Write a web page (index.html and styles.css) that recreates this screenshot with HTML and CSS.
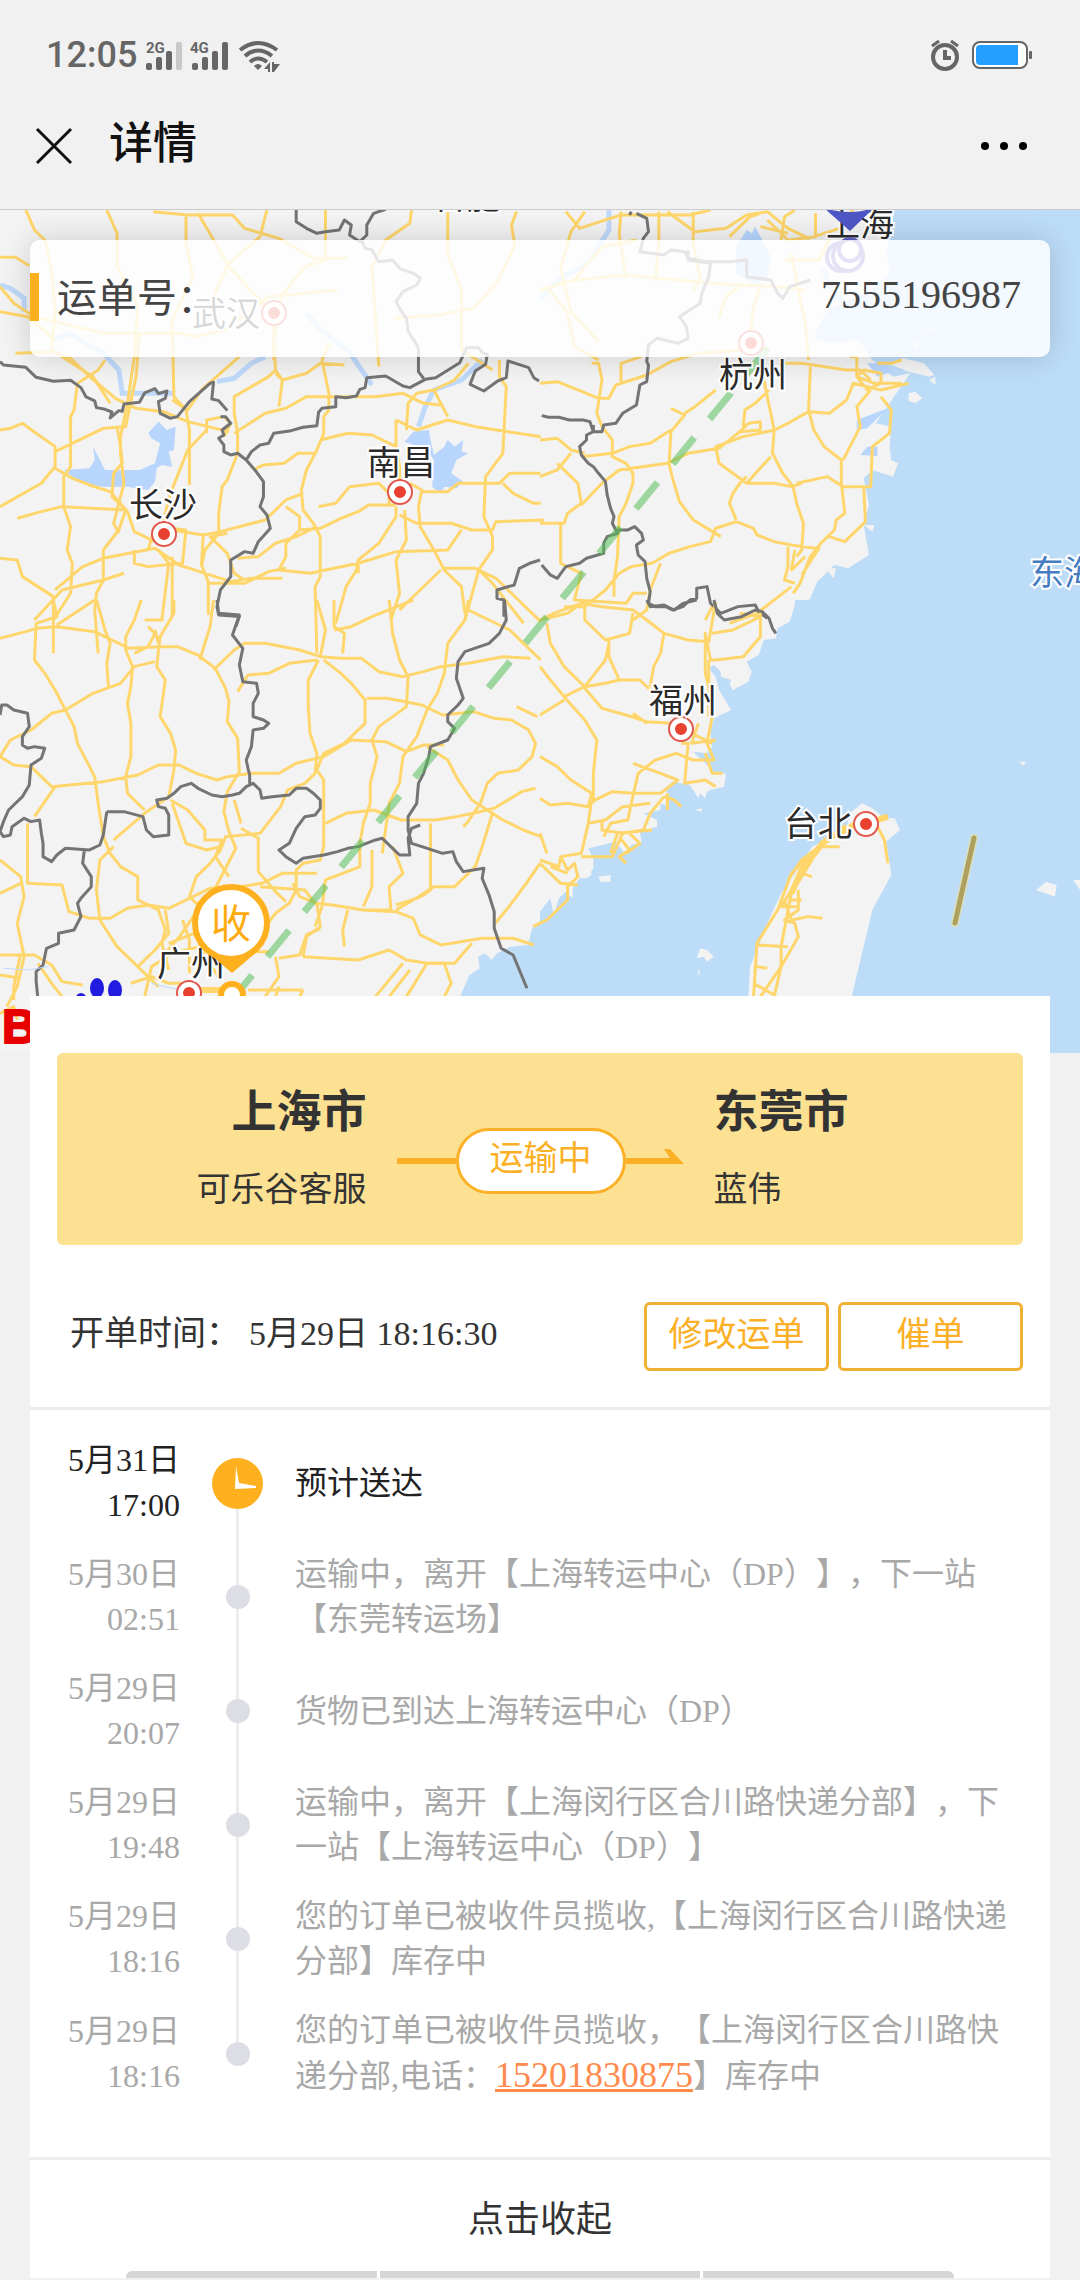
FILE: index.html
```html
<!DOCTYPE html>
<html lang="zh-CN">
<head>
    <meta charset="UTF-8">
    <meta name="viewport" content="width=device-width, initial-scale=1.0">
    <title>详情</title>
    <link rel="stylesheet" href="styles.css">
</head>
<body>
    <!-- Status bar -->
    <div class="status-bar">
        <span class="clock">12:05</span>
        <svg class="signals" width="134" height="34" viewBox="0 0 134 34">
            <g fill="#666">
                <text x="0" y="15" class="signal-text">2G</text>
                <rect x="0" y="25" width="6" height="7" rx="2"/>
                <rect x="10" y="19" width="6" height="13" rx="2"/>
                <rect x="20" y="13" width="6" height="19" rx="2"/>
                <rect x="30" y="4" width="6" height="28" rx="2" fill="#c9c9c9"/>
                <text x="44" y="15" class="signal-text">4G</text>
                <rect x="46" y="25" width="6" height="7" rx="2"/>
                <rect x="56" y="19" width="6" height="13" rx="2"/>
                <rect x="66" y="13" width="6" height="19" rx="2"/>
                <rect x="76" y="4" width="6" height="28" rx="2"/>
                <path d="M112 32l-4-4q4-4 8 0z"/>
                <path d="M118 31l6-7v10h-2v-3zM126 24h2v2h6l-6 8h-2z"/>
            </g>
            <g fill="none" stroke="#666" stroke-width="4">
                <path d="M94 12q18-14 37 0"/>
                <path d="M99 18q13-11 27 0"/>
                <path d="M104 24q8-7 17 0"/>
            </g>
        </svg>
        <svg class="alarm" width="30" height="34" viewBox="0 0 30 34">
            <circle cx="15" cy="19" r="12" fill="none" stroke="#666" stroke-width="4"/>
            <path d="M15 12v8h6" fill="none" stroke="#666" stroke-width="4"/>
            <path d="M2 8l7-5M28 8l-7-5" stroke="#666" stroke-width="3"/>
        </svg>
        <svg class="battery" width="62" height="34" viewBox="0 0 62 34">
            <rect x="1" y="4" width="54" height="26" rx="7" fill="#fff" stroke="#666" stroke-width="2"/>
            <path d="M8 7h38v20H8q-4 0-4-4V11q0-4 4-4z" fill="#249fff"/>
            <rect x="57" y="13" width="3" height="8" rx="1" fill="#666"/>
        </svg>
    </div>

    <!-- Title bar -->
    <header class="nav-bar">
        <button class="icon-button" aria-label="关闭">
            <svg width="38" height="38" viewBox="0 0 38 38"><path d="M2 2l34 34M36 2L2 36" stroke="#111" stroke-width="3"/></svg>
        </button>
        <h1>详情</h1>
        <button class="icon-button more" aria-label="更多">
            <svg width="48" height="10" viewBox="0 0 48 10"><circle cx="5" cy="5" r="4"/><circle cx="24" cy="5" r="4"/><circle cx="43" cy="5" r="4"/></svg>
        </button>
    </header>

    <!-- Map with the waybill number over it -->
    <section class="map">
        <svg class="map-canvas" viewBox="0 210 1080 843" preserveAspectRatio="xMidYMin slice">
            <rect x="0" y="200" width="1080" height="860" fill="#f3f3f3"/>
            <!-- north west -->
            <g transform="translate(0 200) scale(.3444 .3333)">
                <path class="water" d="M430 700l30-35 25 25 25-10-5 70-15 5 10 45-30-5-15 10-5 40-20 25-35-5-25-5-50 0-20 0-60-10-30-20-25-20 75-5 15-25-5-40 15 30 20 40 100 0 45-20 15-60-25-15zM1175 725l25-30 45-5 5 30 10 45 30-25 10-20 20 20 25-20-5 35 20 5-35 20-15 40 35 25-20 20-35-5-10 20-25-20 5-80-20-30z"/>
                <path class="river" d="M0 255l30 10 40 30 0 40M150 420l50-20 100 60 45 50 10 70 150 0M770 470l-40 20-50 45-50 10M890 340l40 50 80 60 70 105M1400 480l-60 60-80 30-25 50-20 60"/>
                <path class="road" d="M75 30l25 60 30 30 20 90 10 120-10 120 120 80 50 80M310 30l30 70 0 100 60 120-10 150-20 140-20 100 0 50 10 90-30 120 15 30M445 35l100 10 130 0 35 40 100 30 100 60 100 0M540 50l0 80 20 100-60 130 5 230 35 40 10 60 0 160M575 40l40 70 50 90 80 90 50 50 0 140M775 30l-20 80-90 80-50 110M945 30l0 150-60 20-70 90-20 130 5 90 20 30-10 80M1195 30l-5 40-70 50-40 80 10 150 10 150M1300 30l0 130 40 110 0 180 90 60M1500 35l-15 40 10 60-50 110-70 80-100 20-130 10"/>
                <path class="road" d="M0 172l45 0 40 25M0 260l40 50 60 40 200 50 220 0 50 10 80-20 130-100 200-20M0 335l80 15 80 70M45 460l110-5 50 20 50 50 80 70 60 30 80 10 70 30 120 30"/>
                <path class="road" d="M0 690l30-5 35-15 40 30 55 40 0 60-40 50-120 70M160 755l140-70 65-5 30-150 10-130M160 805l50 30 50 20 60 20 50 60 20 60 60 30M50 955l70-20 60-15 190 10M225 550l-10 80-10 20 0 150-20 30 0 90 20 60-10 70 15 40-5 90-50 80 0 100M340 680l10 60 5 50-25 30-5 70 40 40-20 60-45 60 0 90-20 40-5 50 10 130M0 1075l50 5 15 50 90 60 0 70M160 1170l80-70 60-25 150-30 70 50 60 20 90 30 60-10 90 0M100 1260l80-90 120-30 60-20M225 550l60-40 20-30M500 600l45 30 40-60 110-100M800 510l-20 20-100 60 0 50 10 60 0 60-30 80-15 20-10 80 0 60-40 50-10 50M550 685l0 170M600 690l-55 60-50 130-20 80M500 990l90 15 50-10 130-35 60-60 50-20M590 1005l-5 90 20 50 0 100M500 1070l0 180M460 1050l30 40-20 170-50 0M600 700l0-40 50-10 20 20-20 40M680 700l90-60 60-15 60-35 200 0 80-10 60 30 50 5"/>
                <path class="road" d="M800 520l20 20 70-20 40-30 70 5M955 430l-20 50 20 100 0 50-15 20 0 50-20 50-30 60-15 60 5 60 30 40 20 40 0 120-15 30 5 200M735 810l30-15 60-5 40-30 50 0M930 720l80-20 70 5 70 35M1150 660l0 80 10 60 0 80M1180 690l5-80 25-30 50-10 60-30 40-50M1150 660l60 30 90-30 80 20 190 30M1260 570l40 80M925 920l50-10 40-50 85-10 30 30 0 40M870 990l60-5 60-30 50-20 30-20 80 0M1190 850l35 20-10 50 5 60 40 70 30 60 50 50 10 80M1220 875l80 0 30-25 120 0 30-30 90 0M1460 850l30 30 60 30 20 0M1160 945l50 25 100 0 60 20 60 0 10-25 140-5M1150 920l0 30-50 80-60 50-5 30-30 50-30 110M1175 930l5 90-30 60 10 100-25 80M1450 480l0 50 20 30-10 200-50 70-5 120 25 60 0 40-40 60 40 40 90 120M690 1075l60-5 50-40 60-20 60-30M830 920l40 30 0 40-40 40 0 40-20 40 90 10 140-30 110-35 150-5 40-60M600 1150l110 0 70-35 50-10M660 1000l-50 10 50 50 20 60 30 20M390 1050l0 40 40 10 100-10 10-100-90-10-20 70M1040 1080l0 40M1290 1105l90 0 60 30 30 30 100 100M1280 1110l-120 120M1390 1110l-40 150"/>
                <path class="border" d="M0 485l10 10 65 7 30 30 50 12 50-3 30 22 15 28 25 12 5 20 25 5 20 8-5 18 25-22 10 2 5-22 45-5 15-28 30-13 10 15 25-8-5 22-20 10 5 35 30 15 20-5 35-45 60-55 10-3-5 50 20 5 25 30M640 650l15 0 15 20-25 20 5 15-15 10 15 20 0 20 20 10 20-5 25 20 15-25 25-20 25-5 15-30 50-8 35-10 40-5 5-40 10-12 40-5 0-30 30 3 30-5 10-20 15-5 5-30 55-5 50 30 20 5 45-25 30-5 70-45 20-45 35 0 10 15 15 5-5 30-30 20-15 40 40 20 40-30 25-10 5-50 60 20 15 30 15 10M715 780l25 30 25 35 0 45-10 30 20 25 10 40-35 40-15 35-25-5-40 25 0 50-30 40-10 50 5 25 60 5-10 30M860 30l0 35 30 20 30 15 25-5 40-5 15-30 20 15-5 30 30 20 20-20 0-30 20-35 35-12M1050 120l10 25 20 5 20 35 40-5 20 25 40 15 20 15-10 20-40 20-20 30 10 20 20 30 5 40 20 30 10 20 0 70 15 20M1568 1080l-30 10-30 15-15 50-50 15 0 25 20 5 0 50"/>
            </g>
            <!-- north east -->
            <g transform="translate(540 200) scale(.3444 .3333)">
                <path class="sea" d="M1025 30l0 60-20 60 10 70-70 60-110 50-40 80 50 20 80-10 40 60 60 50 50-10-40 60-60 90 45 10-5 60 5 40 20 10-15 40-60-20-25 25 15 80-15 60 15 90-60 40-40-10-50 50-20 50-70 80 20 20-25 60H1600V0H1025z"/>
                <path class="water" d="M570 140l30-50 15 10 10-20 20 40 25 50-10 70-40 10-50-30zM920 690l0-30 90-35-60 60zM930 765l20-25 30 0 0 28zM950 490l50 0 20 25-40 15z"/>
                <path class="land" d="M1010 490l45-15 60 15 30 35-15 5-60-15zM1130 540l18-10 0 25zM1070 580l20-5 20 20-20 15-20-8zM1085 425l15 5-5 12-15 0zM1110 390l30-5 5 10zM845 1040l10-20 20 5 5 20-25 15zM830 1105l30 0-8 30zM940 975l30 0-5 20z"/>
                <path class="river" d="M200 30l0 60-60 100-90 50-50 60M820 200l30 80 60 50 200-35"/>
                <path class="road" d="M75 35l40 50 60-20 60-20 200 0 60-15M130 35l-40 60-30 110 30 130 80 90M235 35l-5 70 20 130M345 35l0 100-10 110M445 35l0 100 20 100-20 40M370 35l80 60 90-10 60-40 60-10 60 50 60 30 90-30 40-60M550 110l60-60 30-10M700 120l10-70 30-20M640 80l80 20M800 40l0 70-80 10-60-60M100 240l150-15 200 20 120 10 120 5 80 10M520 350l20-60 50-40M0 270l100-30 80-100 100-20M640 260l-20 60-10 90M730 160l20 110 20 100 10 110M840 120l-30 60-100 0M20 260l60 80 20 100 70 40"/>
                <path class="road" d="M150 490l20 0 10 50-15 100 15 40 30 40 0 50 40 20 20 30 0 30-20 60-20 40-5 120-10 70 0 50M0 550l50-5 60 25 60 25 30 0 20-40 90-30 70-40 80-25 200-15M235 550l0-60 60-20M380 625l40 20-40 50-5 100 10 40 20 70 40 55 80 50M420 640l30-20 60-50M210 760l50-20 60-10 60-40M120 770l90-10M0 720l50-5 40 35 40 10M0 830l50-20 40-50M50 790l40 40 20 20 10 60-40 30-10 30-70 0M120 915l60-65 50-40 140-20 60-30 90-15 60-50 60-5 0-25-35 5-30 30M680 690l-90 20-80 30 10 50 80 60 80 0 50 10 30-10M600 830l-20 20-20 30-10 30 20 50M590 680l5-50 30-20 40-40M650 540l20 100 10 50-5 70 30 60 30 40 10 50 20 60-5 80-15 20M600 850l70-80M680 690l40-20 60-35 60 5 50-40 20-50 80 20 80-20M700 490l60 0 130 20 40 0 30 30M785 500l-5 130 15 60 30 50 50 40 0 70 10 90-25 20-5 30-40 40-30 40-30 80-20 30M900 470l20 0 0 60 50 20 80 0M920 530l20-20 50 10 0 30-40 20zM960 570l-40 50 10 60-30 60-20 40M990 590l30 40-5 70-50 40-5 120-80 0-45-30-90 20M940 865l5 100-60 60-45-15M570 965l-60 20-15 40-60 15-60 20-50 30-60 10-35 20-40 50-60 50-60 0M570 965l50 20 10 20 50 20 50 10 70 10 10 0-50 80M720 1040l0 60-10 40 30 10M740 1050l-10 60 40-40M60 970l0 120 60 30-20 80 150 10 20-30 40 0M0 1260l80-20 40-30M350 1090l-30 80-10 60-40 30M500 1220l-20 40M730 1160l-100 80-80 30"/>
                <path class="road" d="M980 490l40 0 30-10"/>
                <path class="border" d="M260 45l5-10M280 40l30 15 5 40-15 20-10 40 70 10 20-15 40 5 10 20 50 10 70 0 50-5 0 50 70 10 20 40 15 15 20-35 60-20M430 150l0 30 65 10-5 40-20 50-5 30-60 40 20 30 5 35-30 15-60-15-25 20-5 50 5 10-5 50-20 10-10 60-40 25-20 30-35 5-5 20-25 0-10-30-20-5-40 0-30-8-30 0-20-5M155 675l0 20-20 10 0 15-20 20 5 25 20 25 15 10 15 20 20 25 5 40 10 40 10 25-5 20 15 30-30 10-10 20 0 30-50 15-20 15-40 10-25 35-20-10-25-30M225 990l30 0 20-10 20 20 5 20-20 15 5 30 20 20 5 50 10 40-5 35 20 10 30 0 20 10 30-10 20-20 20-5 0-30 30-5 10 50 30 30 50-20 50-5 10 20 25 20"/>
            </g>
            <!-- south west -->
            <g transform="translate(0 600) scale(.3444 .3333)">
                <path class="sea" d="M1568 970l-20 5-15 60-50 5-40 20-15 20-20-20-20 10 5 35-30 20-25 60 0 100 400 0z"/>
                <path class="road" d="M0 115l75-20 30-10 60-5 110 15 50 25 50 25 90-5 50 0 60 25 50 40 30 60 10 40-5 60 30 50 5 100-35 60-10 60 15 60 20 50-30 60-30 60-60 80-40 60-50 60M155 0l10 50-60 20-5 110 30 40 30 50 25 50 30 60 10 50 50 100 10 80 15 100 20 50 30 40 50 30 0 70 60 30 20 60-10 40 20 80M165 75l110-75M280 0l25 90 15 40-10 60 5 70M410 0l-20 60-25 50 0 40 20 50-5 60-10 50 10 60 0 100-15 60 5 50 50 50M505 0l0 40-40 70-10 90 25 40-15 110 30 50 15 50-5 60-15 80-70 50-90 80M430 80l20 20-20 40-40 20M620 0l-10 80-30 100M450 90l10 40M0 470l30-50 60-30 60-50 40-10 80-50 80-30 40-50 60-15M0 470l40 25 50 5 60 60 150-15 100-20 60-30 60 0 50 25 60 20 30-10 70-10 80 0 50-30 80-20 80-50 100 5 60 30 50-20 60 0M620 210l60-60 30-20 60 0 100 20 60 20 60 5 60 0 50 40 70 15 60-15 50-15 80-10 100-20 80 5"/>
                <path class="road" d="M690 275l30-50 60-5 60-30 80-10M925 180l-30 60 0 80 5 80 20 60-5 60-30 30-50 20-20 50-60 80-100 10-15 40-30 40-40 40-20 60 60 60-20 40-100 40M920 0l25 90-15 80M970 0l0 80 30 20-5 60M970 90l50-10 60-30 120-50M1130 0l10 100 20 80 25 50-5 90-80 60-20 40 15 50-20 80 0 60-20 60-10 60 0 70-50 20-50 20-10 80-20 60M940 180l50 40 30 30 40 50 0 70-60 60-60 30-20 50 20 30 0 200-10 40-50 10-20 20 0 60-20 40-40 30-60 80M1065 295l60 0 100 20 60 30 90-10 60 20 50 5 50 30 20 40-10 40-40 40-60 10-30 30-20 60-40 60-10 10M1360 0l0 30 60 30 60 30 40 40 50 50M1360 0l-10 60-50 70-10 90-20 60-30 50-30 80-40 60-10 80-30 60-20 150M1240 440l60 40 30 60 40 60 90 60 60 30 50 20M945 670l60-30 80-10 80 30 100 0 60-10 50-10 60-15 80-50 40-10M1250 670l0 200-20 15-20 10-60 20M1080 750l0 110-25 60M1140 740l30 80-40 40 5 70-80 0-90-15-50-5-30-40-130-10M1430 640l-30 100-20 60-60 60-60 0-60 40-50 30M1050 930l100 5 50 20 20 50 60 30 120-20 90 0 60 20M1500 320l60 30M1568 790l-40 60-50 70-40 50M850 850l20 40 50 20 10 70-40 30-10 60M1010 930l-15 60 5 50M880 1070l160 10 90-30 50 30 60 10 80 0 50-60"/>
                <path class="road" d="M100 650l60-90M80 670l0 180 100 5 20 80 60 20 60 0 50-30 60-10 60 10 60-30 60-30 90-5 60-10 60-30 100 0M0 780l60 50 10 60-20 80 20 100-20 90-30 60M330 740l-40 40-10 90 10 90 50 80 60 60 60 60M480 930l10 70-40 50-50 50M495 600l50 30 50 60 0 30 50 0-20 50 40 60M500 610l40 120 60 20 40-10M700 685l50 30 0 100 50 60 30 30M680 600l20 70M780 1055l-100 0M810 1075l60-10 20-60 40-20M0 1065l100 0 50 30 30 50 60 10M0 1125l60 10M60 1060l-20 100 0 40M110 1090l40 60 30 40M380 1150l60-20 50 20 60 0 40 20M420 1190l20-90 60-40 80-20 60 100M530 960l20 60 0 100M720 1170l160 0M770 1190l40-60-10-60M800 1190l10-30M870 1190l10-20M1090 1190l80-100M1130 1190l60-80M1180 1190l60-100 50 0 20 60-20 40M0 1240l40-20 10 40M0 880l60-30"/>
                <path class="road wide" d="M560 1170l80 0 60 15"/>
                <path class="border" d="M0 345l5-30 15 0 20 15 40 10 5 40-20 30 0 25 15 10 20-5 30 5-10 30-30 20-5 60-20 35-40 40-15 35-10 30 10 15 20-5 5-25 35-25 20 10 25-5 5 40 5 30 0 40 25 15 15-20 25-20 70 5 30-15 10-30 10-70M245 750l-5 40 25 40 0 30-30 35-10 15 10 40-20 40-45 10 0 30-35 15-10 50-20 20 0 30 5 50M310 635l50 0 55 15 10 40 20 20 45-5 0-60-10-20-20-5-5-20 30-5 20-15 20-20 30-10 20 15 40 20 30 5 30-5 20-5 20-20 20-10 20 20 5 25 30-5 50-5 20-20 30 0 20 15 20 20 0 25-15 20-30 5-25 35-20 45-30 20 20 20 30 20 20-15 60-10 40-10 30-10 30-5 50-20 20-5 30 30 20 20 30 0-5-50 10-30 25-10M630 0l5 40 60 5-20 60 30 40-10 50 10 50 40 5 5 30-15 30 0 40 30 10 15 10-15 15-30 5-5 50-15 40 5 25 5 20 0 30M1465 0l5 60-20 40-30 30-70 25-20 30-5 50 20 60-15 20-30 30 0 20 20 20-20 35-50 20-5 30-15 50-15 30-5 60-25 40 0 40 10 40 30 10 60 20 30-5 10 30 20 30 60-10-5 30 20 50 15 50 0 50 20 60 35 20 40 100"/>
                <path class="river thin" d="M10 1105l70 5 60-10M440 1150l80 20"/>
            </g>
            <!-- south east -->
            <g transform="translate(540 600) scale(.3444 .3333)">
                <path class="sea" d="M740 0l0 15-15 50-35 20-5 30-35 5-15 45-35 20 15 30-10 30-45 25-5-30-30-10 0-15-20-20-15 10 20 25 10 40 35 60-50 25-10 40 5 45-15 20-40-5 60 60 5 30-20 30-20-10-10 30-25-40-50-10-20 20 10 30-10 20-15-5 0 20-50 10 40 20 0 20-50 15 5 30-30 10-15 30-30-40-80 20 15 30 0 30-20 30-20 0-20 30 0 30-20-20-20 20-15 50-10-50-30 40 0 460 1600 0 0-1400z"/>
                <path class="land" d="M905 1190l60-260 55-105-5-40-10-60 40-35-15-35-30 0-35-30-30-15-35 30-10 50-100 50-50 80-40 60-40 90-50 130-5 90zM540 190l50 0 20 30-10 20-40 30-10-20 15-25-20-10zM500 520l40 0-5 40-40 10zM440 545l50 10-10 40-25-25zM170 830l35-5 0 20-30 0zM130 810l15-15 5 30-15 10zM450 630l20-5 0 10zM1390 485l20 0-5 12zM1440 870l30-25 30 10-5 35zM1548 840l20 0 0 30zM455 1075l10-30 20 5 20 20-20 15-10-15zM458 1120l4-15 2 22z"/>
                <path class="road" d="M0 60l40-20 80-30 60 10 90 10 40 30 50 40 70 20 60 5 20-120M130 0l0 60 60 60 70-20 10-60M200 120l0 50 30 70 60 0 30 30M200 130l-10 50-60 80-60-60-40-70-10-60M360 100l-10 60-20 40-10 60M0 200l30 40 40 50 60 70 35 60-10 100 0 90M70 300l-70 45M70 290l60-30 60-10 40-10M130 265l50 60 70 20 60 20 70 5 30 10M500 100l60-10 80-40-60-10M640 30l0 80-50 60-80 10-15 0-15-80 0 120 20 80 0 50-15 80 20 50-60 0-50-20-60 20-50 40-20 90-10 50-50 10-20 40M410 430l20 0-10 120 60-10 30 20M0 470l50 30 40 40 60 40-10 40-60-10-50 5-30-20M150 605l60-30 60 5 80 0 50-40-50-20-80-30M360 590l30 10 20 20M360 590l-40 50-20 50-60 10-60-10 0-30M370 580l0 50M150 600l-10 70-20 90-60 10-5 30-55-20M0 700l20 60M140 670l50-10 50-40 80-10M240 700l-30 70-90 0M205 760l20-60 100-10M230 710l30 40-30 20 20 20M260 700l30 30-40 30M60 770l20 40 20-20 10 40-30 30 0 40-60 60-40 20M0 790l60 60 50 5M80 820l-50-20M490 180l0 170M460 370l-20 60 70-10M440 400l60 30M480 460l20 60 30 0M310 370l-40-30M820 730l-90 90-40 110-60 100-10 160M790 780l-60 100-30 160 0 60-60 90M760 820l30 10M710 900l20 60 50-10 40 5M750 870l0 60-40 30 30 10 10 40-50 90-20 90M720 840l40-60 50-40 60 0M720 900l40 0M730 870l-30 50 50 0M630 1035l90 5M620 1150l60 35M630 1100l30 5M970 660l40-10M980 680l20 40 10 70"/>
                <path class="road wide" d="M890 680l-70 50-60 80-30 70M870 700l50-30M980 660l30-10"/>
                <path class="border" d="M310 0l10 20 40-5 30 15 25-20 40-10M505 0l10 40 20 20 50-10 40-20 20 5 20 20 10 30 10 15"/>
            </g>

            <line class="route-line" x1="768" y1="348" x2="240" y2="990"/>
            <line x1="974" y1="838" x2="955" y2="923" stroke="#dbe0bd" stroke-width="8" stroke-linecap="round"/>
            <line x1="974" y1="838" x2="955" y2="923" stroke="#aea05f" stroke-width="5" stroke-linecap="round"/>

            <g class="city-dots">
                <circle cx="164" cy="534" r="9"/><circle cx="400" cy="492" r="9"/><circle cx="274" cy="313" r="9"/>
                <circle cx="751" cy="343" r="9"/><circle cx="681" cy="729" r="9"/><circle cx="866" cy="824" r="9"/>
                <circle cx="189" cy="993" r="9"/>
            </g>
            <g class="city-names">
                <text x="467" y="209">合肥</text>
                <text x="860" y="236">上海</text>
                <text x="226" y="326">武汉</text>
                <text x="753" y="387">杭州</text>
                <text x="401" y="475">南昌</text>
                <text x="163" y="517">长沙</text>
                <text x="683" y="713">福州</text>
                <text x="818" y="836">台北</text>
                <text x="191" y="976">广州</text>
                <text x="1064" y="585" class="sea-name">东海</text>
            </g>

            <!-- sender pin -->
            <path d="M824 208q26 8 50 0l-24 23z" fill="#4f57c7"/>
            <g fill="#fff" stroke="#6464c8" stroke-width="4">
                <circle cx="841" cy="257" r="14"/><circle cx="848" cy="256" r="15"/><circle cx="850" cy="250" r="11"/>
            </g>
            <!-- receiver pin -->
            <circle cx="232" cy="995" r="11" fill="#fff" stroke="#ffb01e" stroke-width="6"/>
            <path d="M206 951l26 22 26-22z" fill="#ffb01e"/>
            <circle cx="231" cy="923" r="36" fill="#fff" stroke="#ffb01e" stroke-width="6"/>
            <text x="231" y="938" class="pin-text">收</text>
            <!-- map provider mark -->
            <g fill="#211ce0"><ellipse cx="97" cy="988" rx="7" ry="10"/><ellipse cx="115" cy="990" rx="7" ry="10"/><ellipse cx="81" cy="1003" rx="7" ry="10"/></g>
            <text x="2" y="1043" class="provider">Bai</text>
        </svg>

        <div class="waybill">
            <span class="waybill-label">运单号：</span>
            <span class="waybill-number">7555196987</span>
        </div>
    </section>

    <main class="sheet">
        <section class="route-card">
            <div class="place from">
                <h2>上海市</h2>
                <p>可乐谷客服</p>
            </div>
            <div class="progress">
                <span class="line"></span>
                <span class="state">运输中</span>
                <svg class="arrow" width="58" height="24" viewBox="0 0 58 24"><path d="M0 9h44L38 0h6l14 15H0z" fill="#fcb025"/></svg>
            </div>
            <div class="place to">
                <h2>东莞市</h2>
                <p>蓝伟</p>
            </div>
        </section>

        <div class="order-row">
            <span class="order-label">开单时间：</span>
            <time>5月29日 18:16:30</time>
            <button class="order-button">修改运单</button>
            <button class="order-button">催单</button>
        </div>

        <ol class="timeline">
            <li class="current">
                <time>5月31日<br>17:00</time>
                <span class="mark">
                    <svg width="51" height="51" viewBox="0 0 51 51"><circle cx="25.5" cy="25.5" r="25.5" fill="#ffb01e"/><path d="M24 8l3 17 17 3v2l-21 1z" fill="#fff"/></svg>
                </span>
                <p>预计送达</p>
            </li>
            <li>
                <time>5月30日<br>02:51</time>
                <span class="mark"><i class="dot"></i></span>
                <p>运输中，离开【上海转运中心（DP）】，下一站<br>【东莞转运场】</p>
            </li>
            <li>
                <time>5月29日<br>20:07</time>
                <span class="mark"><i class="dot"></i></span>
                <p>货物已到达上海转运中心（DP）</p>
            </li>
            <li>
                <time>5月29日<br>19:48</time>
                <span class="mark"><i class="dot"></i></span>
                <p>运输中，离开【上海闵行区合川路快递分部】，下<br>一站【上海转运中心（DP）】</p>
            </li>
            <li>
                <time>5月29日<br>18:16</time>
                <span class="mark"><i class="dot"></i></span>
                <p>您的订单已被收件员揽收,【上海闵行区合川路快递<br>分部】库存中</p>
            </li>
            <li>
                <time>5月29日<br>18:16</time>
                <span class="mark"><i class="dot"></i></span>
                <p>您的订单已被收件员揽收，【上海闵行区合川路快<br>递分部,电话：<a href="tel:15201830875">15201830875</a>】库存中</p>
            </li>
        </ol>

        <button class="collapse">点击收起</button>

        <div class="next-block"><span></span><span></span><span></span></div>
    </main>
</body>
</html>
```

FILE: styles.css
```css
* {
    box-sizing: border-box;
}

body {
    margin: 0;
    background: #f1f1f1;
    color: #333;
    font-family: "Liberation Serif", "Noto Sans CJK SC", serif;
    font-size: 32px;
    text-spacing-trim: space-all;
}

h1, h2, p, ol {
    margin: 0;
    padding: 0;
}

button {
    font-family: inherit;
    background: none;
    border: none;
    padding: 0;
    cursor: pointer;
}

svg {
    display: block;
}

/* Status bar */
.status-bar {
    display: flex;
    align-items: center;
    height: 76px;
    padding: 34px 46px 0;
    color: #666;
}

.clock {
    font: 500 36px/40px Roboto, sans-serif;
    width: 100px;
}

.signals {
    margin-right: auto;
    overflow: visible;
}

.signal-text {
    font: bold 15px Roboto, sans-serif;
}

.alarm {
    margin-right: 12px;
}

/* Title bar */
.nav-bar {
    display: flex;
    align-items: center;
    height: 134px;
    padding: 4px 52px 0 35px;
    border-bottom: 1px solid #ccc;
}

.nav-bar h1 {
    font-size: 44px;
    line-height: 60px;
    font-weight: 500;
    color: #111;
    margin-left: 36px;
}

.icon-button {
    padding-top: 2px;
}

.more {
    margin-left: auto;
}

/* Map */
.map {
    position: relative;
}

.map-canvas {
    width: 100%;
    aspect-ratio: 1080 / 843;
    overflow: hidden;
}

.sea {
    fill: #bddcf8;
}

.land {
    fill: #f3f3f3;
}

.water {
    fill: #b7d5fd;
}

.river {
    fill: none;
    stroke: #bfd9fb;
    stroke-width: 5;
    vector-effect: non-scaling-stroke;
}

.river.thin {
    stroke-width: 1;
}

.road, .border {
    fill: none;
    stroke: #ffd66b;
    stroke-width: 3;
    stroke-linejoin: round;
    vector-effect: non-scaling-stroke;
}

.road.wide {
    stroke-width: 6;
}

.border {
    stroke: #747474;
}

.route-line {
    stroke: #55c05a;
    stroke-opacity: 0.55;
    stroke-width: 7;
    stroke-dasharray: 34 24;
}

.city-dots circle {
    fill: #e8412f;
    stroke: #fff;
    stroke-width: 6;
    outline: 2px solid #e2574b;
    outline-offset: -1px;
    border-radius: 50%;
}

.city-names text {
    font: 34px "Noto Sans CJK SC", sans-serif;
    text-anchor: middle;
    fill: #2b2b2b;
    stroke: #fff;
    stroke-width: 4;
    paint-order: stroke;
}

.city-names .sea-name {
    fill: #467cc0;
}

.pin-text {
    font: 40px "Noto Sans CJK SC", sans-serif;
    text-anchor: middle;
    fill: #ffab10;
}

.provider {
    font: bold 48px "Liberation Sans", sans-serif;
    fill: #e60000;
    stroke: #e60000;
    stroke-width: 2;
}

.waybill {
    position: absolute;
    top: 30px;
    left: 30px;
    right: 30px;
    display: flex;
    align-items: center;
    justify-content: space-between;
    height: 117px;
    padding: 0 29px 8px 27px;
    border-radius: 10px;
    background: rgba(255, 255, 255, 0.82);
    box-shadow: 0 0 30px rgba(0, 0, 0, 0.16);
    font-size: 40px;
    color: #444;
}

.waybill::before {
    content: "";
    position: absolute;
    left: 0;
    top: 33px;
    width: 9px;
    height: 48px;
    background: #ffb01e;
}

/* White sheet over the bottom of the map */
.sheet {
    position: relative;
    margin: -57px 30px 0;
    padding-top: 57px;
    background: #fff;
}

.route-card {
    display: grid;
    grid-template-columns: 1fr 287px 1fr;
    column-gap: 30px;
    margin: 0 27px;
    height: 192px;
    padding: 27px 0;
    border-radius: 6px;
    background: #fde192;
}

.place h2 {
    font-size: 45px;
    line-height: 66px;
}

.place p {
    font-size: 34px;
    line-height: 48px;
    margin-top: 20px;
}

.from {
    text-align: right;
}

.progress {
    display: flex;
    align-items: center;
    height: 66px;
    margin-top: 48px;
}

.line {
    flex: 1;
    height: 6px;
    background: #fcb025;
}

.state {
    width: 170px;
    height: 66px;
    border: 3px solid #fcb025;
    border-radius: 33px;
    background: #fff;
    color: #fcb025;
    font-size: 34px;
    line-height: 56px;
    text-align: center;
}

.order-row {
    display: flex;
    align-items: center;
    gap: 9px;
    height: 165px;
    padding: 20px 27px 0 40px;
    border-bottom: 3px solid #ececec;
    font-size: 34px;
}

.order-label, .order-row time {
    padding-bottom: 12px;
}

.order-row time {
    margin-right: auto;
}

.order-button {
    width: 185px;
    height: 69px;
    padding-bottom: 10px;
    border: 3px solid #efb034;
    border-radius: 6px;
    color: #fcb025;
    font-size: 34px;
}

/* Timeline */
.timeline {
    list-style: none;
    padding: 28px 20px 34px 30px;
    color: #a8a8a8;
    line-height: 45px;
}

.timeline li {
    display: grid;
    grid-template-columns: 120px 115px 1fr;
    align-items: center;
    min-height: 90px;
    margin-bottom: 24px;
    white-space: nowrap;
}

.timeline .current {
    color: #222;
}

.timeline time {
    text-align: right;
}

.mark {
    position: relative;
    display: flex;
    justify-content: center;
    align-items: center;
    align-self: stretch;
}

/* line down to the next mark */
.timeline li:not(:last-child) .mark::after {
    content: "";
    position: absolute;
    top: 50%;
    left: 56px;
    width: 3px;
    height: calc(100% + 24px);
    background: #ececef;
}

.mark svg, .dot {
    position: relative;
    z-index: 1;
}

.dot {
    width: 24px;
    height: 24px;
    border-radius: 50%;
    background: #dddde6;
}

.timeline a {
    color: #ff8a4c;
    font-size: 36px;
}

.collapse {
    display: block;
    width: 100%;
    height: 114px;
    border-top: 3px solid #ececec;
    color: #333;
    font-size: 36px;
}

.next-block {
    display: grid;
    grid-template-columns: 251fr 320fr 251fr;
    gap: 3px;
    height: 7px;
    margin: 0 96px;
}

.next-block span {
    background: #d6d6d6;
}

.next-block span:first-child {
    border-top-left-radius: 6px;
}

.next-block span:last-child {
    border-top-right-radius: 6px;
}
```
